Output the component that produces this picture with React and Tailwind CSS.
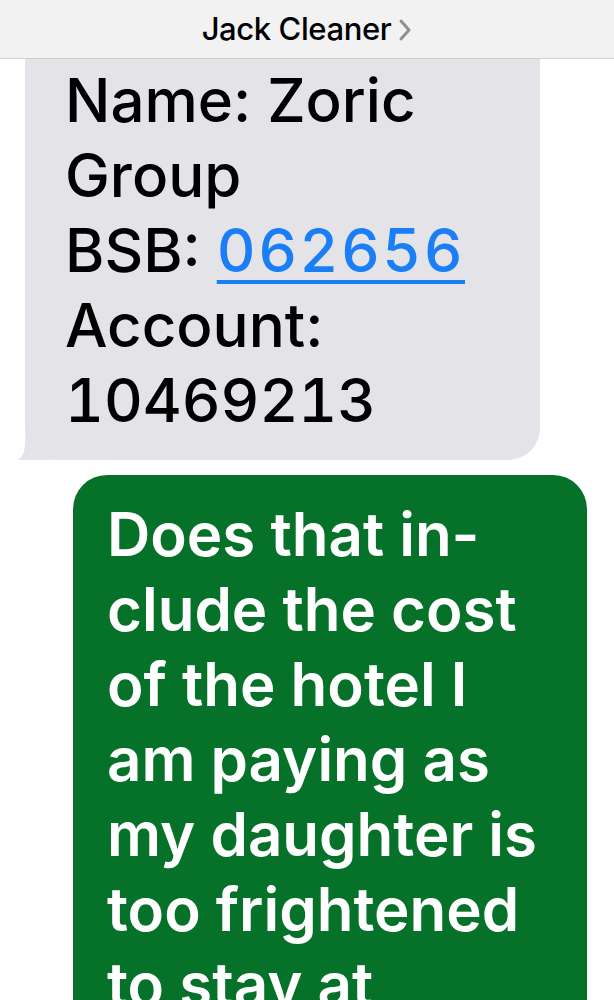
import React from 'react';

const font = { fontFamily: 'Inter, "Noto Sans", sans-serif' };

// incoming bank details, then the start of the outgoing reply
const incoming = [
  <>Name: Zoric</>,
  <>Group</>,
  <>BSB: <span className="text-[#1a7ef6] tabular-nums tracking-[2.5px] underline decoration-[4px] underline-offset-[8px]">062656</span></>,
  <>Account:</>,
  <span className="tabular-nums">10469213</span>,
];

const outgoing = [
  'Does that in-',
  'clude the cost',
  'of the hotel I',
  'am paying as',
  'my daughter is',
  'too frightened',
  'to stay at',
];

export default function App() {
  return (
    <div className="w-[614px] h-[1000px] overflow-hidden bg-white relative" style={font}>
      <div className="absolute top-0 left-0 right-0 z-10 h-[59px] bg-[#f2f2f2] border-b border-[#cfcfcf] flex items-center justify-center">
        <span className="text-[31px] font-medium text-black tracking-[-0.4px]">Jack Cleaner</span>
        <svg width="14" height="24" viewBox="0 0 14 24" className="ml-[7px] mt-[1px]">
          <polyline points="3,3 11,12 3,21" fill="none" stroke="#8e8e93" strokeWidth="3" strokeLinecap="round" strokeLinejoin="round" />
        </svg>
      </div>

      <div className="pt-[59px] flex flex-col">
        <div className="relative ml-[25px] w-[515px] bg-[#e3e3e8] rounded-b-[32px] pl-[40px] pt-[4px] pb-[22px]">
          {incoming.map((line, i) => (
            <div key={i} className="text-[60px] leading-[75px] text-black font-medium whitespace-nowrap">{line}</div>
          ))}
          <svg width="34" height="26" viewBox="0 0 34 26" className="absolute left-[-7px] bottom-0">
            <path d="M7 0 L20 0 L22 14 C24 19 28 22 34 26 L0 26 C6 22 8 14 7 0 Z" fill="#e3e3e8" />
          </svg>
        </div>

        <div className="ml-[73px] mt-[15px] w-[514px] bg-[#067128] rounded-t-[34px] pl-[34px] pt-[22px] pb-[40px]">
          {outgoing.map((line, i) => (
            <div key={i} className="text-[60px] leading-[75px] text-white font-semibold whitespace-nowrap">{line}</div>
          ))}
        </div>
      </div>
    </div>
  );
}
